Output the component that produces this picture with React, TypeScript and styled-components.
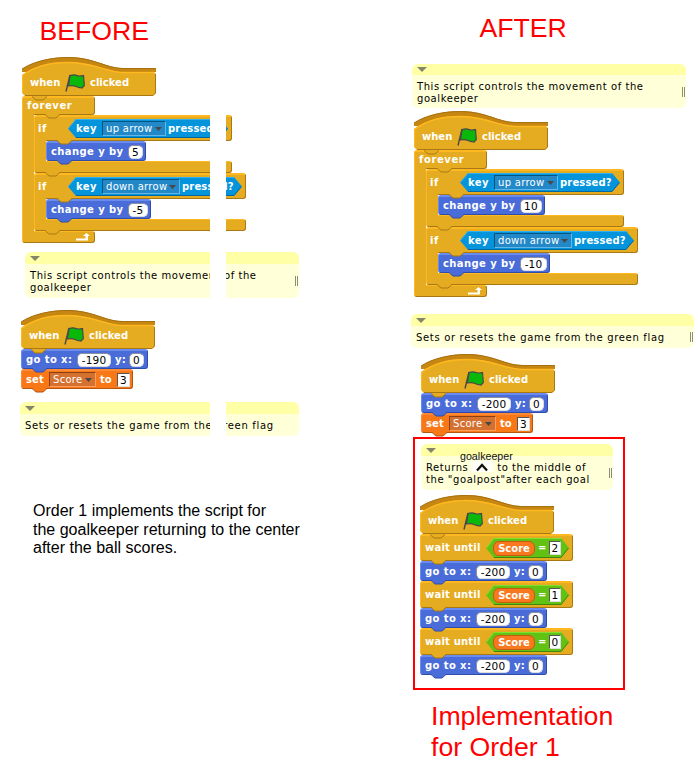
import React from 'react';
import styled, { createGlobalStyle } from 'styled-components';

const Global = createGlobalStyle`
  *, *::before { box-sizing: border-box; }
  body { margin: 0; background: #fff; }
`;

type Tone = { fill: string; light: string; dark: string };
const gold: Tone = { fill: '#e6ac21', light: '#ffb81f', dark: '#a87814' };
const blue: Tone = { fill: '#4a6cd8', light: '#6a8cf0', dark: '#2f4da8' };
const orange: Tone = { fill: '#f87818', light: '#ff8a35', dark: '#b45510' };

const Page = styled.main`
  display: grid;
  grid-template-columns: 411px 287px;
  width: 698px;
  height: 769px;
  overflow: hidden;
  background: #fff;
  position: relative;
`;
const Column = styled.section`
  display: flex;
  flex-direction: column;
  align-items: flex-start;
`;
const Title = styled.h1<{ $x: number; $top: number }>`
  margin: ${p => p.$top}px 0 0 ${p => p.$x}px;
  font: 400 26.67px/31px 'Liberation Sans', Arial, sans-serif;
  color: #f00;
  white-space: nowrap;
`;
const Caption = styled.p`
  margin: 66px 0 0 33px;
  font: 400 16px/18.5px 'Liberation Sans', Arial, sans-serif;
  color: #000;
  white-space: nowrap;
`;
const Place = styled.div<{ $x: number; $top: number }>`
  margin: ${p => p.$top}px 0 0 ${p => p.$x}px;
`;
const EraseStripe = styled.div`
  position: absolute;
  z-index: 5;
  left: 210px;
  top: 100px;
  width: 16px;
  height: 345px;
  background: #fff;
`;

/* ---- blocks ---- */
const Block = styled.div<{ $t: Tone; $w: number; $h: number }>`
  position: relative;
  display: flex;
  align-items: center;
  width: ${p => p.$w}px;
  height: ${p => p.$h}px;
  background: ${p => p.$t.fill};
  border: 1px solid;
  border-color: ${p => `${p.$t.light} ${p.$t.dark} ${p.$t.dark} ${p.$t.light}`};
  border-top-width: 2px;
  border-radius: 3px;
`;
const Nub = styled.svg<{ $x?: number }>`
  position: absolute;
  z-index: 2;
  left: ${p => p.$x ?? 10}px;
  bottom: -5px;
`;
const Connector = ({ tone, x }: { tone: Tone; x?: number }) => (
  <Nub $x={x} width="15" height="5" viewBox="0 0 15 5">
    <path d="M0 0H15L11 4H4Z" fill={tone.fill} />
    <path d="M0 .5L4 4H11L15 .5" fill="none" stroke={tone.dark} strokeWidth="1" />
  </Nub>
);
const Word = styled.span<{ $w: number; $x?: number; $ls?: number }>`
  position: relative;
  flex: none;
  width: ${p => p.$w}px;
  margin-left: ${p => p.$x ?? 0}px;
  font: 700 10px/12px 'DejaVu Sans', Verdana, sans-serif;
  letter-spacing: ${p => p.$ls ?? 0.5}px;
  color: #fff;
  white-space: nowrap;
`;
const Field = styled.span<{ $w: number; $square?: boolean }>`
  flex: none;
  width: ${p => p.$w}px;
  height: 14px;
  border-radius: ${p => (p.$square ? 0 : 5)}px;
  border: 1px solid ${p => (p.$square ? '#555' : '#8b8fa0')};
  border-right-color: #ddd;
  border-bottom-color: #ddd;
  background: #fff;
  color: #000;
  text-align: center;
  font: 400 10.5px/12px 'DejaVu Sans', Verdana, sans-serif;
  letter-spacing: 0.2px;
  white-space: nowrap;
`;
const Select = styled.span<{ $w: number; $kind: 'key' | 'score' }>`
  flex: none;
  display: flex;
  align-items: center;
  justify-content: space-between;
  width: ${p => p.$w}px;
  height: 15px;
  padding: 0 3px 0 3px;
  background: ${p => (p.$kind === 'key' ? '#2388c8' : '#d47030')};
  border: 1px solid;
  border-color: ${p => (p.$kind === 'key' ? '#07547e #64b8e8 #64b8e8 #07547e' : '#8a4010 #ffa060 #ffa060 #8a4010')};
  color: #fff;
  font: 400 10px/12px 'DejaVu Sans', Verdana, sans-serif;
  letter-spacing: 0.3px;
  white-space: nowrap;
`;
const Caret = () => (
  <svg width="7" height="4" viewBox="0 0 7 4"><path d="M0 0H7L3.5 4Z" fill="#484848" /></svg>
);

const HatBox = styled.div`
  position: relative;
  display: flex;
  align-items: center;
  width: 134px;
  height: 39px;
  padding: 12px 0 0 8px;
`;
const HatArt = styled.svg`
  position: absolute;
  left: 0;
  top: 0;
`;
const FlagArt = styled.svg`
  position: relative;
  flex: none;
`;
const Hat = () => (
  <HatBox>
    <HatArt width="134" height="39" viewBox="0 0 134 39">
      <path d="M0 15V12C12 4 30 0 46 0C72 0 84 11 101 11H134V15Z" fill="#c68612" />
      <path d="M0 12C12 4 30 .5 46 .5C72 .5 84 11.5 101 11.5H134" fill="none" stroke="#a87010" />
      <path d="M0 18C12 9 29 5 46 5C72 5 85 15 102 15H132L134 17V36L131 39H3L0 36Z" fill="#e6ac21" />
      <path d="M.5 36V18.5C12 9.5 29 5.5 46 5.5C72 5.5 85 15.5 102 15.5H132" fill="none" stroke="#ffb81f" strokeWidth="1.3" />
      <path d="M133.5 17V36L131 38.5H3" fill="none" stroke="#a87814" />
    </HatArt>
    <Word $w={35} $ls={0}>when</Word>
    <FlagArt width="20" height="18" viewBox="0 0 20 18">
      <path d="M5 1.5C8 .5 10 .5 12 1.5C14 2.500 16 2 18.500 1.500L19.300 11.500L17 14L14.500 13.500C11.500 14 11 10.500 3.500 12Z" fill="#0ab80a" stroke="#484848" strokeWidth="1.2" />
      <path d="M5 1L1 17.500" stroke="#484848" strokeWidth="1.400" />
    </FlagArt>
    <Word $w={45} $x={5} $ls={0}>clicked</Word>
    <Connector tone={gold} x={10} />
  </HatBox>
);

const CBlock = styled.div`
  position: relative;
`;
const CHead = styled(Block)`
  border-bottom-left-radius: 0;
`;
const CBody = styled.div`
  position: relative;
  padding-left: 12px;
  &::before {
    content: '';
    position: absolute;
    z-index: 1;
    left: 0;
    top: -1px;
    bottom: -1px;
    width: 12px;
    border-left: 1px solid #ffb81f;
    background: #e6ac21;
  }
`;
const CFoot = styled(Block)`
  border-top-left-radius: 0;
  justify-content: flex-end;
  border-top-width: 1px;
  padding-right: 4px;
`;
const Hex = styled.div<{ $w: number; $green?: boolean }>`
  position: relative;
  flex: none;
  display: flex;
  align-items: center;
  width: ${p => p.$w}px;
  height: ${p => (p.$green ? 20 : 19)}px;
`;
const HexArt = styled.svg`
  position: absolute;
  left: 0;
  top: 0;
`;
const HexShape = ({ w, h, fill, light, dark }: { w: number; h: number; fill: string; light: string; dark: string }) => (
  <HexArt width={w} height={h} viewBox={`0 0 ${w} ${h}`}>
    <path d={`M0 ${h / 2}L8 0H${w - 8}L${w} ${h / 2}L${w - 8} ${h}H8Z`} fill={fill} />
    <path d={`M.5 ${h / 2}L8 .5H${w - 8}`} fill="none" stroke={light} />
    <path d={`M8 ${h - 0.5}H${w - 8}L${w - 0.5} ${h / 2}`} fill="none" stroke={dark} />
  </HexArt>
);
const Row = styled.div`
  position: relative;
  display: flex;
  align-items: center;
`;

const If = ({ w, arrow, arrowW, changeW, value, valueW }: {
  w: number; arrow: string; arrowW: number; changeW: number; value: string; valueW: number;
}) => (
  <CBlock>
    <CHead $t={gold} $w={w} $h={26}>
      <Word $x={3} $w={30}>if</Word>
      <Hex $w={w - 38}>
        <HexShape w={w - 38} h={19} fill="#0494dc" light="#30b0f0" dark="#0468a0" />
        <Row>
          <Word $x={8} $w={26} $ls={0.4}>key</Word>
          <Select $w={arrowW} $kind="key">{arrow}<Caret /></Select>
          <Word $x={2} $w={54} $ls={0.15}>pressed?</Word>
        </Row>
      </Hex>
      <Connector tone={gold} x={22} />
    </CHead>
    <CBody>
      <Block $t={blue} $w={changeW} $h={20}>
        <Word $x={4} $w={77} $ls={0.4}>change y by</Word>
        <Field $w={valueW}>{value}</Field>
        <Connector tone={blue} />
      </Block>
    </CBody>
    <CFoot $t={gold} $w={w} $h={12}><Connector tone={gold} /></CFoot>
  </CBlock>
);

const Forever = ({ values, widths, fields }: { values: string[]; widths: number[]; fields: number[] }) => (
  <CBlock>
    <CHead $t={gold} $w={73} $h={19}>
      <Word $x={4} $w={50} $ls={0.6}>forever</Word>
      <Connector tone={gold} x={22} />
    </CHead>
    <CBody>
      <If w={198} arrow="up arrow" arrowW={64} changeW={widths[0]} value={values[0]} valueW={fields[0]} />
      <If w={212} arrow="down arrow" arrowW={78} changeW={widths[1]} value={values[1]} valueW={fields[1]} />
    </CBody>
    <CFoot $t={gold} $w={73} $h={12}>
      <svg width="14" height="8" viewBox="0 0 14 8"><path d="M0 5.500H9.500V3H7L10.500 0L14 3H12V7.500H0Z" fill="#fff" /></svg>
    </CFoot>
  </CBlock>
);

const GoTo = ({ x }: { x: string }) => (
  <Block $t={blue} $w={127} $h={20}>
    <Word $x={4} $w={51} $ls={0.4}>go to x:</Word>
    <Field $w={34}>{x}</Field>
    <Word $x={4} $w={14} $ls={0.2}>y:</Word>
    <Field $w={15}>0</Field>
    <Connector tone={blue} />
  </Block>
);
const SetScore = () => (
  <Block $t={orange} $w={112} $h={20}>
    <Word $x={4} $w={23} $ls={0.1}>set</Word>
    <Select $w={47} $kind="score">Score<Caret /></Select>
    <Word $x={4} $w={17} $ls={0}>to</Word>
    <Field $w={13} $square>3</Field>
    <Connector tone={orange} />
  </Block>
);
const ScorePill = styled.span`
  position: relative;
  display: block;
  width: 42px;
  height: 15px;
  margin-left: 7px;
  border: 1px solid #c85a10;
  border-radius: 6px;
  background: #f87820;
  color: #fff;
  text-align: center;
  font: 700 10px/13px 'DejaVu Sans', Verdana, sans-serif;
`;
const WaitUntil = ({ n }: { n: number }) => (
  <Block $t={gold} $w={153} $h={27}>
    <Word $x={4} $w={61} $ls={0.2}>wait until</Word>
    <Hex $w={83} $green>
      <HexShape w={83} h={20} fill="#62c213" light="#80e030" dark="#3f8510" />
      <Row>
        <ScorePill>Score</ScorePill>
        <Word $x={3} $w={11} $ls={0}>=</Word>
        <Field $w={12} $square>{n}</Field>
      </Row>
    </Hex>
    <Connector tone={gold} />
  </Block>
);

/* ---- comments ---- */
const Note = styled.div<{ $w: number; $h: number; $head: number }>`
  position: relative;
  display: flex;
  flex-direction: column;
  width: ${p => p.$w}px;
  height: ${p => p.$h}px;
  border-radius: 6px;
  background: linear-gradient(#ffffa5 ${p => p.$head}px, #ffffd8 ${p => p.$head}px);
  color: #000;
  font: 400 10px/12px 'DejaVu Sans', Verdana, sans-serif;
  white-space: pre;
`;
const NoteHead = styled.div<{ $h: number }>`
  display: flex;
  align-items: center;
  height: ${p => p.$h}px;
  padding-left: 5px;
`;
const NoteText = styled.div<{ $ls: number }>`
  padding: 6px 0 0 5px;
  letter-spacing: ${p => p.$ls}px;
`;
const Grip = styled.span<{ $bottom: number }>`
  position: absolute;
  right: 1px;
  bottom: ${p => p.$bottom}px;
  width: 3px;
  height: 10px;
  border: solid #8c8c78;
  border-width: 0 1px;
`;
const Comment = ({ w, h, head, text, ls = 0.57, grip = 12 }: {
  w: number; h: number; head: number; text: string; ls?: number; grip?: number;
}) => (
  <Note $w={w} $h={h} $head={head}>
    <NoteHead $h={head}>
      <svg width="10" height="5" viewBox="0 0 10 5"><path d="M0 0H10L5 5Z" fill="#85856a" /></svg>
    </NoteHead>
    <NoteText $ls={ls}>{text}</NoteText>
    {grip > 0 && <Grip $bottom={grip} />}
  </Note>
);
const Frame = styled.div`
  width: 212px;
  height: 253px;
  margin: 4px 0 0 2px;
  border: 2px solid #f00;
  position: relative;
  z-index: 3;
`;
const Insert = styled.div`
  position: absolute;
  z-index: 4;
  left: 45px;
  top: 11px;
  width: 60px;
  color: #111;
  font: 400 10.67px/13px 'Liberation Sans', Arial, sans-serif;
`;
const InsertMark = styled.svg`
  display: block;
  margin: -2px 0 0 11px;
`;

export default function App() {
  return (
    <Page>
      <Global />
      <Column>
        <Title $x={39.5} $top={16}>BEFORE</Title>
        <Place $x={22} $top={10}>
          <Hat />
          <Forever values={['5', '-5']} widths={[100, 105]} fields={[15, 20]} />
        </Place>
        <Place $x={25} $top={9}>
          <Comment w={274} h={46} head={12} text={'This script controls the movement of the\ngoalkeeper'} />
        </Place>
        <Place $x={21} $top={12}>
          <Hat />
          <GoTo x="-190" />
          <SetScore />
        </Place>
        <Place $x={20} $top={13}>
          <Comment w={279} h={34} head={12} grip={0} ls={0.67} text="Sets or resets the game from the green flag" />
        </Place>
        <Caption>Order 1 implements the script for<br />the goalkeeper returning to the center<br />after the ball scores.</Caption>
      </Column>
      <EraseStripe />
      <Column>
        <Title $x={68.5} $top={13}>AFTER</Title>
        <Place $x={1} $top={20}>
          <Comment w={274} h={44} head={11} grip={11} text={'This script controls the movement of the\ngoalkeeper'} />
        </Place>
        <Place $x={3} $top={3}>
          <Hat />
          <Forever values={['10', '-10']} widths={[107, 112]} fields={[22, 27]} />
        </Place>
        <Place $x={0} $top={17}>
          <Comment w={283} h={34} head={12} grip={6} ls={0.67} text="Sets or resets the game from the green flag" />
        </Place>
        <Place $x={10} $top={6}>
          <Hat />
          <GoTo x="-200" />
          <SetScore />
        </Place>
        <Frame>
          <Place $x={6} $top={5}>
            <Comment w={192} h={46} head={12} text={'Returns       \u2009to the middle of\nthe "goalpost"after each goal'} />
          </Place>
          <Insert>
            goalkeeper
            <InsertMark width="22" height="11" viewBox="0 0 22 11">
              <rect width="22" height="11" fill="#fff" opacity=".8" />
              <path d="M6 9.500L11 4L16 9.500" fill="none" stroke="#111" strokeWidth="2.2" />
            </InsertMark>
          </Insert>
          <Place $x={5} $top={5}>
            <Hat />
            <WaitUntil n={2} /><GoTo x="-200" />
            <WaitUntil n={1} /><GoTo x="-200" />
            <WaitUntil n={0} /><GoTo x="-200" />
          </Place>
        </Frame>
        <Title $x={20} $top={11}>Implementation<br />for Order 1</Title>
      </Column>
    </Page>
  );
}
